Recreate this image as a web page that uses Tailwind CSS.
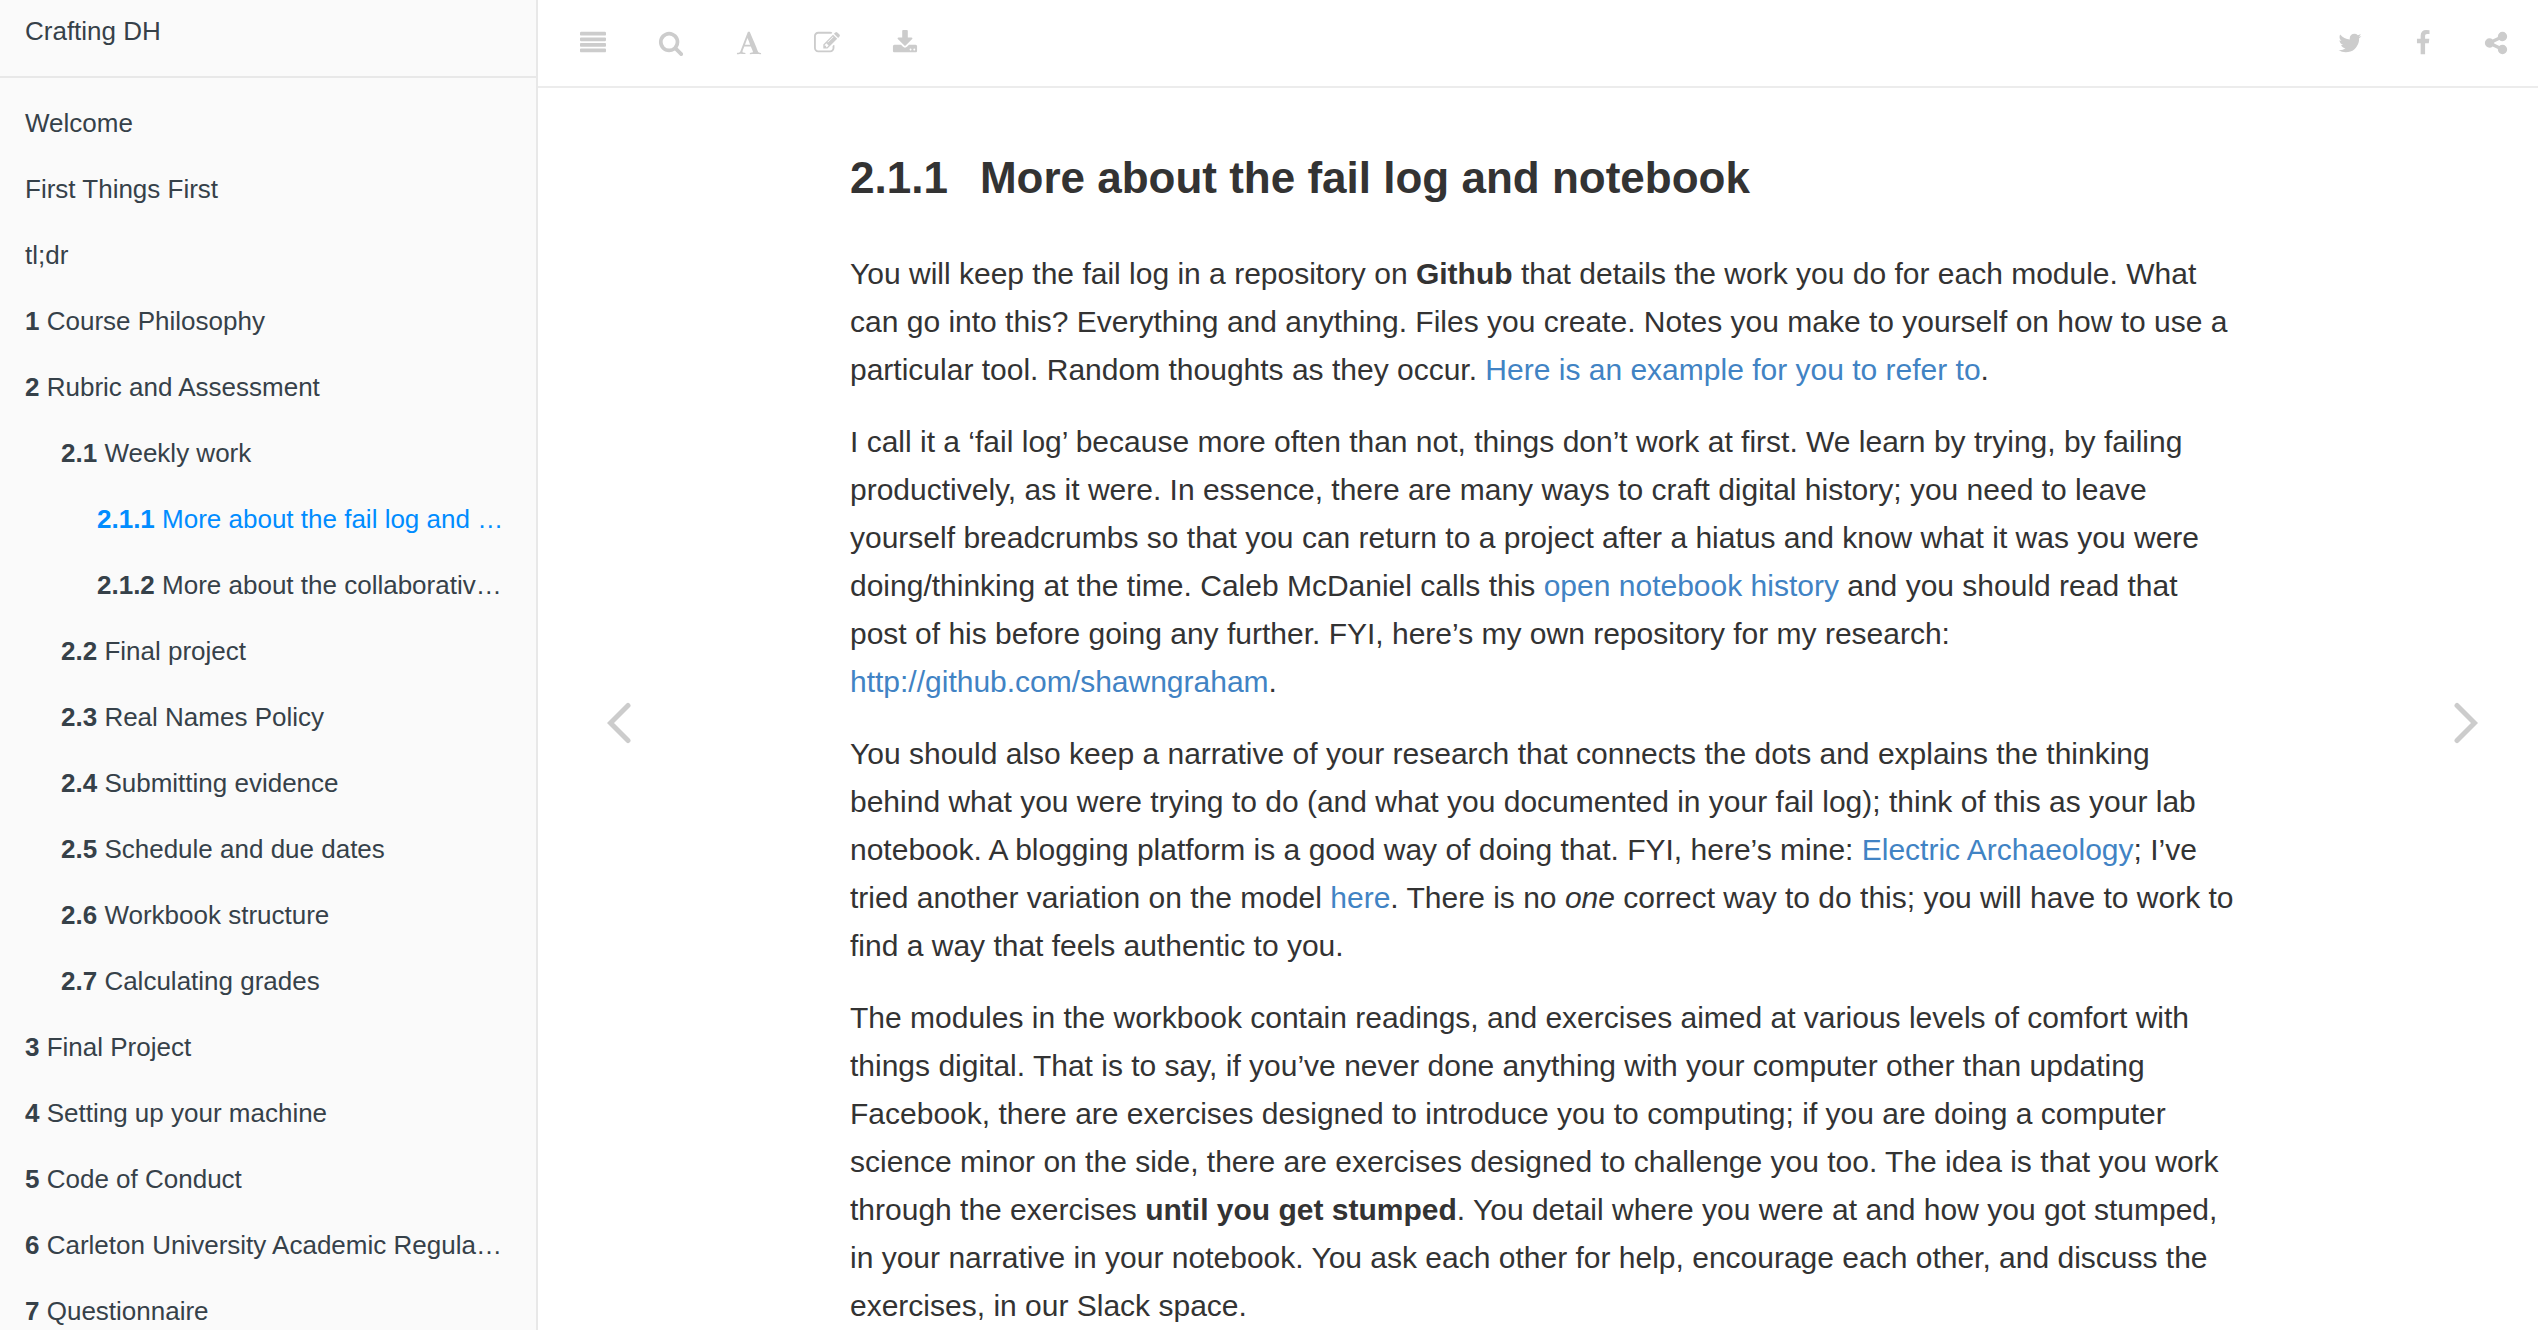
<!DOCTYPE html>
<html lang="en">
<head>
<meta charset="utf-8">
<title>2.1.1 More about the fail log and notebook | Crafting DH</title>
<script src="https://cdn.jsdelivr.net/npm/@tailwindcss/browser@4"></script>
</head>
<body class="flex h-screen overflow-hidden bg-white font-['Liberation_Sans',Arial,sans-serif] text-[#333]">

<aside class="w-[538px] shrink-0 overflow-y-auto border-r-2 border-[#e8e8e8] bg-[#fafafa] text-[26px] leading-[34px] text-[#364149] [scrollbar-width:none]">
  <a href="#" class="block border-b-2 border-[#e8e8e8] px-[25px] pt-[14px] pb-7">Crafting DH</a>
  <nav aria-label="Table of contents" class="pt-3">
    <ul>
      <li><a href="#" class="block truncate px-[25px] py-4">Welcome</a></li>
      <li><a href="#" class="block truncate px-[25px] py-4">First Things First</a></li>
      <li><a href="#" class="block truncate px-[25px] py-4">tl;dr</a></li>
      <li><a href="#" class="block truncate px-[25px] py-4"><b>1</b> Course Philosophy</a></li>
      <li>
        <a href="#" class="block truncate px-[25px] py-4"><b>2</b> Rubric and Assessment</a>
        <ul class="pl-9">
          <li>
            <a href="#" class="block truncate px-[25px] py-4"><b>2.1</b> Weekly work</a>
            <ul class="pl-9">
              <li><a href="#" aria-current="page" class="block truncate px-[25px] py-4 text-[#008cff]"><b>2.1.1</b> More about the fail log and …</a></li>
              <li><a href="#" class="block truncate px-[25px] py-4"><b>2.1.2</b> More about the collaborativ…</a></li>
            </ul>
          </li>
          <li><a href="#" class="block truncate px-[25px] py-4"><b>2.2</b> Final project</a></li>
          <li><a href="#" class="block truncate px-[25px] py-4"><b>2.3</b> Real Names Policy</a></li>
          <li><a href="#" class="block truncate px-[25px] py-4"><b>2.4</b> Submitting evidence</a></li>
          <li><a href="#" class="block truncate px-[25px] py-4"><b>2.5</b> Schedule and due dates</a></li>
          <li><a href="#" class="block truncate px-[25px] py-4"><b>2.6</b> Workbook structure</a></li>
          <li><a href="#" class="block truncate px-[25px] py-4"><b>2.7</b> Calculating grades</a></li>
        </ul>
      </li>
      <li><a href="#" class="block truncate px-[25px] py-4"><b>3</b> Final Project</a></li>
      <li><a href="#" class="block truncate px-[25px] py-4"><b>4</b> Setting up your machine</a></li>
      <li><a href="#" class="block truncate px-[25px] py-4"><b>5</b> Code of Conduct</a></li>
      <li><a href="#" class="block truncate px-[25px] py-4"><b>6</b> Carleton University Academic Regula…</a></li>
      <li><a href="#" class="block truncate px-[25px] py-4"><b>7</b> Questionnaire</a></li>
    </ul>
  </nav>
</aside>

<div class="flex min-w-0 flex-1 flex-col">
  <header class="flex h-[88px] shrink-0 items-center justify-between border-b-2 border-[#ececec] pr-1.5 pl-4 text-[#ccc]">
    <div class="flex">
      <button type="button" aria-label="Toggle sidebar" class="flex h-16 w-[78px] items-center justify-center">
        <svg class="size-[26px]" viewBox="0 0 1792 1792" fill="currentColor"><path d="M1792 1344v128q0 26-19 45t-45 19h-1664q-26 0-45-19t-19-45v-128q0-26 19-45t45-19h1664q26 0 45 19t19 45zm0-384v128q0 26-19 45t-45 19h-1664q-26 0-45-19t-19-45v-128q0-26 19-45t45-19h1664q26 0 45 19t19 45zm0-384v128q0 26-19 45t-45 19h-1664q-26 0-45-19t-19-45v-128q0-26 19-45t45-19h1664q26 0 45 19t19 45zm0-384v128q0 26-19 45t-45 19h-1664q-26 0-45-19t-19-45v-128q0-26 19-45t45-19h1664q26 0 45 19t19 45z"/></svg>
      </button>
      <button type="button" aria-label="Search" class="flex h-16 w-[78px] items-center justify-center">
        <svg class="size-[26px]" viewBox="0 0 1792 1792" fill="currentColor"><path d="M1216 832q0-185-131.5-316.5t-316.5-131.5-316.5 131.5-131.5 316.5 131.5 316.5 316.5 131.5 316.5-131.5 131.5-316.5zm512 832q0 52-38 90t-90 38q-54 0-90-38l-343-342q-179 124-399 124-143 0-273.5-55.5t-225-150-150-225-55.5-273.5 55.5-273.5 150-225 225-150 273.5-55.5 273.5 55.5 225 150 150 225 55.5 273.5q0 220-124 399l343 343q37 37 37 90z"/></svg>
      </button>
      <button type="button" aria-label="Font settings" class="flex h-16 w-[78px] items-center justify-center">
        <svg class="size-[26px]" viewBox="0 0 1792 1792" fill="currentColor"><path d="M789 559l-170 450q33 0 136.5 2t160.5 2q19 0 57-2-87-253-184-452zm-725 1105l2-79q23-7 56-12.5t57-10.5 49.5-14.5 44.5-29 31-50.5l237-616 280-724h128q8 14 11 21l205 480q33 78 106 257.5t114 274.5q15 34 58 144.5t72 168.5q20 45 35 57 19 15 88 29.5t84 20.5q6 38 6 57 0 5-.5 13.5t-.5 12.5q-63 0-190-8t-191-8q-76 0-215 7t-178 8q0-43 4-78l131-28q1 0 12.5-2.5t15.5-3.5 14.5-4.5 15-6.5 11-8 9-11 2.5-14q0-16-31-96.5t-72-177.5-42-100l-450-2q-26 58-76.5 195.5t-50.5 162.5q0 22 14 37.5t43.5 24.5 48.5 13.5 57 8.5 41 4q1 19 1 58 0 9-2 27-58 0-174.5-10t-174.5-10q-8 0-26.5 4t-21.5 4q-80 14-188 14z"/></svg>
      </button>
      <button type="button" aria-label="Edit" class="flex h-16 w-[78px] items-center justify-center">
        <svg class="size-[26px]" viewBox="0 0 1792 1792" fill="currentColor"><path d="M888 1184l116-116-152-152-116 116v56h96v96h56zm440-720q-16-16-33 1l-350 350q-17 17-1 33t33-1l350-350q17-17 1-33zm80 594v190q0 119-84.5 203.5t-203.5 84.5h-832q-119 0-203.5-84.5t-84.5-203.5v-832q0-119 84.5-203.5t203.5-84.5h832q63 0 117 25 15 7 18 23 3 17-9 29l-49 49q-14 14-32 8-23-6-45-6h-832q-66 0-113 47t-47 113v832q0 66 47 113t113 47h832q66 0 113-47t47-113v-126q0-13 9-22l64-64q15-15 35-7t20 29zm-96-738l288 288-672 672h-288v-288zm444 132l-92 92-288-288 92-92q28-28 68-28t68 28l152 152q28 28 28 68t-28 68z"/></svg>
      </button>
      <button type="button" aria-label="Download" class="flex h-16 w-[78px] items-center justify-center">
        <svg class="size-[26px]" viewBox="0 0 1792 1792" fill="currentColor"><path d="M1344 1344q0-26-19-45t-45-19-45 19-19 45 19 45 45 19 45-19 19-45zm256 0q0-26-19-45t-45-19-45 19-19 45 19 45 45 19 45-19 19-45zm128-224v320q0 40-28 68t-68 28h-1472q-40 0-68-28t-28-68v-320q0-40 28-68t68-28h465l135 136q58 56 136 56t136-56l136-136h464q40 0 68 28t28 68zm-325-569q17 41-14 70l-448 448q-18 19-45 19t-45-19l-448-448q-31-29-14-70 17-39 59-39h256v-448q0-26 19-45t45-19h256q26 0 45 19t19 45v448h256q42 0 59 39z"/></svg>
      </button>
    </div>
    <div class="flex">
      <button type="button" aria-label="Twitter" class="flex h-16 w-[73px] items-center justify-center">
        <svg class="size-[26px]" viewBox="0 0 1792 1792" fill="currentColor"><path d="M1684 408q-67 98-162 167 1 14 1 42 0 130-38 259.5t-115.5 248.5-184.5 210.5-258 146-323 54.5q-271 0-496-145 35 4 78 4 225 0 401-138-105-2-188-64.5t-114-159.5q33 5 61 5 43 0 85-11-112-23-185.5-111.5t-73.5-205.5v-4q68 38 146 41-66-44-105-115t-39-154q0-88 44-163 121 149 294.5 238.5t371.5 99.5q-8-38-8-74 0-134 94.5-228.5t228.5-94.5q140 0 236 102 109-21 205-78-37 115-142 178 93-10 186-50z"/></svg>
      </button>
      <button type="button" aria-label="Facebook" class="flex h-16 w-[73px] items-center justify-center">
        <svg class="size-[26px]" viewBox="0 0 1792 1792" fill="currentColor"><path d="M1343 12v264h-157q-86 0-116 36t-30 108v189h293l-39 296h-254v759h-306v-759h-255v-296h255v-218q0-186 104-288.5t277-102.5q147 0 228 12z"/></svg>
      </button>
      <button type="button" aria-label="Share" class="flex h-16 w-[73px] items-center justify-center">
        <svg class="size-[26px]" viewBox="0 0 1792 1792" fill="currentColor"><path d="M1344 1024q133 0 226.5 93.5t93.5 226.5-93.5 226.5-226.5 93.5-226.5-93.5-93.5-226.5q0-12 2-34l-360-180q-92 86-218 86-133 0-226.5-93.5t-93.5-226.5 93.5-226.5 226.5-93.5q126 0 218 86l360-180q-2-22-2-34 0-133 93.5-226.5t226.5-93.5 226.5 93.5 93.5 226.5-93.5 226.5-226.5 93.5q-126 0-218-86l-360 180q2 22 2 34t-2 34l360 180q92-86 218-86z"/></svg>
      </button>
    </div>
  </header>

  <div class="flex min-h-0 flex-1">
    <a href="#" aria-label="Previous page" class="flex w-[162px] shrink-0 items-center justify-center pt-7 text-[#ccc]">
      <svg class="h-[42px] w-6" viewBox="0 0 24 42" fill="none" stroke="currentColor" stroke-width="5" stroke-linecap="round"><path d="M21 3.500L3.500 21L21 38.500"/></svg>
    </a>
    <main class="min-w-0 flex-1 overflow-y-auto pt-[66px] pr-1.5 [scrollbar-width:none]">
      <article class="mx-auto flex max-w-[1388px] flex-col gap-6 pb-6 text-[30px] leading-[48px]">
        <h1 class="mb-6 text-[44px] leading-[48px] font-bold"><span class="mr-8">2.1.1</span>More about the fail log and notebook</h1>
        <p>You will keep the fail log in a repository on <strong>Github</strong> that details the work you do for each module. What can go into this? Everything and anything. Files you create. Notes you make to yourself on how to use a particular tool. Random thoughts as they occur. <a href="#" class="text-[#4183c4]">Here is an example for you to refer to</a>.</p>
        <p>I call it a ‘fail log’ because more often than not, things don’t work at first. We learn by trying, by failing productively, as it were. In essence, there are many ways to craft digital history; you need to leave yourself breadcrumbs so that you can return to a project after a hiatus and know what it was you were doing/thinking at the time. Caleb McDaniel calls this <a href="#" class="text-[#4183c4]">open notebook history</a> and you should read that post of his before going any further. FYI, here’s my own repository for my research: <a href="#" class="text-[#4183c4]">http://github.com/shawngraham</a>.</p>
        <p>You should also keep a narrative of your research that connects the dots and explains the thinking behind what you were trying to do (and what you documented in your fail log); think of this as your lab notebook. A blogging platform is a good way of doing that. FYI, here’s mine: <a href="#" class="text-[#4183c4]">Electric Archaeology</a>; I’ve tried another variation on the model <a href="#" class="text-[#4183c4]">here</a>. There is no <em>one</em> correct way to do this; you will have to work to find a way that feels authentic to you.</p>
        <p>The modules in the workbook contain readings, and exercises aimed at various levels of comfort with things digital. That is to say, if you’ve never done anything with your computer other than updating Facebook, there are exercises designed to introduce you to computing; if you are doing a computer science minor on the side, there are exercises designed to challenge you too. The idea is that you work through the exercises <strong>until you get stumped</strong>. You detail where you were at and how you got stumped, in your narrative in your notebook. You ask each other for help, encourage each other, and discuss the exercises, in our Slack space.</p>
      </article>
    </main>
    <a href="#" aria-label="Next page" class="flex w-36 shrink-0 items-center justify-center pt-7 text-[#ccc]">
      <svg class="h-[42px] w-6" viewBox="0 0 24 42" fill="none" stroke="currentColor" stroke-width="5" stroke-linecap="round"><path d="M3 3.500L20.500 21L3 38.500"/></svg>
    </a>
  </div>
</div>
</body>
</html>
